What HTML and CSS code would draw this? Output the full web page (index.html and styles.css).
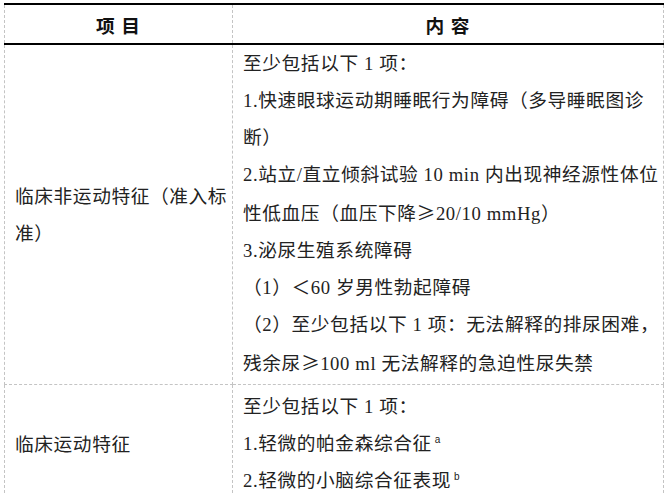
FILE: index.html
```html
<!DOCTYPE html>
<html lang="zh">
<head>
<meta charset="utf-8">
<link rel="stylesheet" href="styles.css">
</head>
<body>
<table class="grid">
  <colgroup><col class="c1"><col class="c2"></colgroup>
  <thead>
    <tr class="head">
      <th>项&nbsp;目</th>
      <th>内&nbsp;容</th>
    </tr>
  </thead>
  <tbody>
    <tr class="r1">
      <td class="label"><div class="ln">临床非运动特征（准入标</div><div class="ln">准）</div></td>
      <td class="content">
        <div class="ln">至少包括以下 1 项：</div>
        <div class="ln">1.快速眼球运动期睡眠行为障碍（多导睡眠图诊</div>
        <div class="ln">断）</div>
        <div class="ln">2.站立/直立倾斜试验 10 min 内出现神经源性体位</div>
        <div class="ln">性低血压（血压下降<span class="cjk">≥</span>20/10 mmHg）</div>
        <div class="ln">3.泌尿生殖系统障碍</div>
        <div class="ln">（1）＜60 岁男性勃起障碍</div>
        <div class="ln">（2）至少包括以下 1 项：无法解释的排尿困难，</div>
        <div class="ln">残余尿<span class="cjk">≥</span>100 ml 无法解释的急迫性尿失禁</div>
      </td>
    </tr>
    <tr class="r2">
      <td class="label"><div class="ln">临床运动特征</div></td>
      <td class="content">
        <div class="ln">至少包括以下 1 项：</div>
        <div class="ln">1.轻微的帕金森综合征<sup>a</sup></div>
        <div class="ln">2.轻微的小脑综合征表现<sup>b</sup></div>
      </td>
    </tr>
  </tbody>
</table>
</body>
</html>
```
FILE: styles.css
```css
html, body {
  margin: 0;
  padding: 0;
  background: #ffffff;
  overflow: hidden;
}
body {
  width: 668px;
  height: 494px;
  font-family: "Liberation Serif", "Noto Sans CJK SC", serif;
  color: #222222;
}
.grid {
  margin: 3px 0 0 4px;
  width: 659px;
  border-collapse: collapse;
  table-layout: fixed;
}
.c1 { width: 228px; }
.c2 { width: 431px; }
.grid th,
.grid td {
  border-left: 1px dashed #c4c4c4;
  border-right: 1px dashed #c4c4c4;
  padding: 0 0 0 10px;
}
.head th {
  height: 38px;
  padding: 0;
  border-top: 2px solid #000000;
  border-bottom: 2px solid #000000;
  font-family: "Liberation Serif", "Noto Sans CJK SC", serif;
  font-weight: 700;
  font-size: 18.7px;
  letter-spacing: 1px;
  color: #111111;
  text-align: center;
  vertical-align: middle;
}
.r1 td {
  border-bottom: 1px dashed #c4c4c4;
}
.content {
  vertical-align: top;
  padding-top: 2px;
}
.r1 .content {
  padding-bottom: 2px;
}
.r2 .content {
  padding-top: 3px;
  padding-bottom: 4px;
}
.label {
  vertical-align: middle;
}
.ln {
  white-space: nowrap;
  font-size: 18.7px;
  line-height: 37px;
  letter-spacing: 0.6px;
}
.cjk {
  font-family: "Noto Sans CJK SC", sans-serif;
}
.ln sup {
  font-family: "Liberation Sans", sans-serif;
  font-size: 10px;
  vertical-align: 7px;
  line-height: 0;
  margin-left: 3px;
}
```
